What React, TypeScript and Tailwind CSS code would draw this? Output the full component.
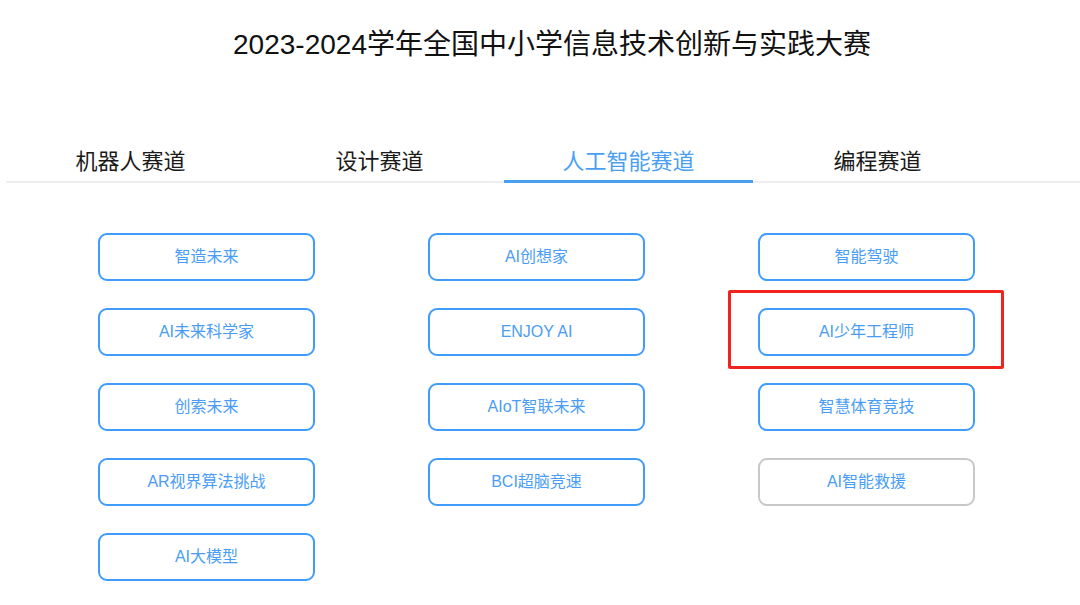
const tabs = ['机器人赛道', '设计赛道', '人工智能赛道', '编程赛道'];

const columns = [
  ['智造未来', 'AI未来科学家', '创索未来', 'AR视界算法挑战', 'AI大模型'],
  ['AI创想家', 'ENJOY AI', 'AIoT智联未来', 'BCI超脑竞速'],
  ['智能驾驶', 'AI少年工程师', '智慧体育竞技', 'AI智能救援'],
];

const font = { fontFamily: '"Liberation Sans", "Noto Sans CJK SC", sans-serif' };

function Track({ name, muted, marked }: { name: string; muted?: boolean; marked?: boolean }) {
  const btn = (
    <div
      className={`w-[217px] h-[48px] rounded-[9px] border-2 flex items-center justify-center text-[16px] text-[#4a9df6] bg-white ${
        muted ? 'border-[#c8c8c8]' : 'border-[#3f9cfb]'
      }`}
    >
      {name}
    </div>
  );
  if (!marked) return btn;
  return (
    <div className="relative">
      {btn}
      <div className="absolute left-[-30px] top-[-18px] w-[276px] h-[79px] border-[3px] border-[#f0231f] rounded-[2px]" />
    </div>
  );
}

export default function App() {
  return (
    <div className="w-[1080px] h-[605px] bg-white overflow-hidden" style={font}>
      <h1 className="pt-[27px] pl-[24px] text-center text-[28px] leading-[36px] text-[#111]">
        2023-2024学年全国中小学信息技术创新与实践大赛
      </h1>

      <div className="mt-[84px] ml-[6px] flex border-b-2 border-[#eeeeee]">
        {tabs.map((t, i) => (
          <div
            key={t}
            className={`w-[249px] text-center text-[22px] leading-[30px] pb-[3px] -mb-[2px] border-b-[3px] ${
              i === 2 ? 'text-[#4a9ff5] border-[#4a9ff5]' : 'text-[#1a1a1a] border-transparent'
            }`}
          >
            {t}
          </div>
        ))}
      </div>

      <div className="mt-[50px] ml-[98px] flex gap-[113px]">
        {columns.map((col, ci) => (
          <div key={ci} className="flex flex-col gap-[27px]">
            {col.map((name) => (
              <Track
                key={name}
                name={name}
                muted={name === 'AI智能救援'}
                marked={name === 'AI少年工程师'}
              />
            ))}
          </div>
        ))}
      </div>
    </div>
  );
}
